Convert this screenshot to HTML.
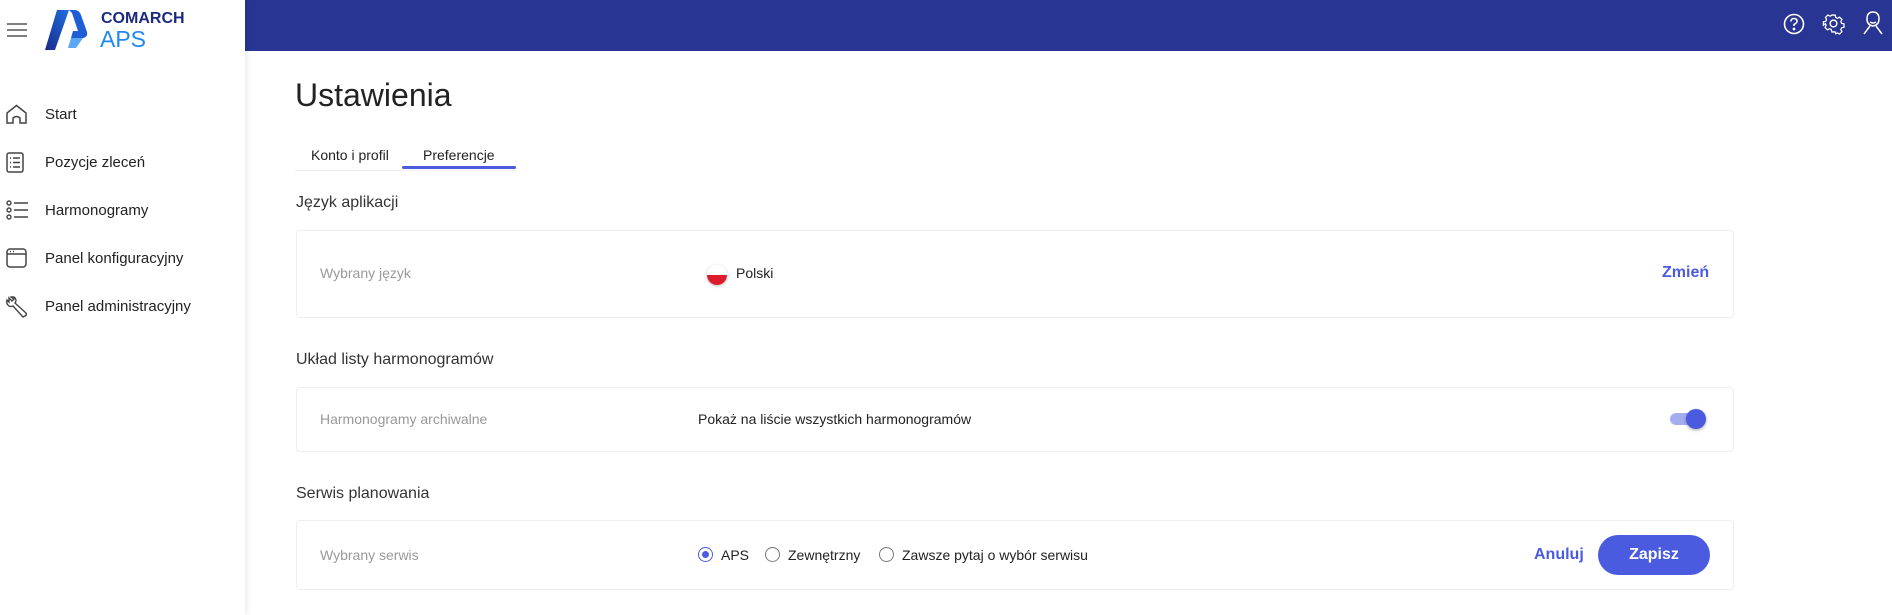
<!DOCTYPE html>
<html><head><meta charset="utf-8">
<style>
*{margin:0;padding:0;box-sizing:border-box}
body{width:1892px;height:615px;overflow:hidden;background:#fff;font-family:"Liberation Sans",sans-serif;color:#222;position:relative}
.abs{position:absolute}
.top{left:245px;top:0;width:1647px;height:51px;background:#283593}
.side{left:0;top:0;width:245px;height:615px;background:#fff;box-shadow:2px 0 6px rgba(0,0,0,0.08);z-index:2}
.nav{position:absolute;left:45px;font-size:15px;color:#222}
.ic{position:absolute;left:6px}
.card{position:absolute;left:296px;width:1438px;border:1px solid #eee;border-radius:4px;background:#fff}
.lbl{position:absolute;left:320px;font-size:14px;color:#999}
.h2{position:absolute;left:296px;font-size:16px;color:#333}
.t{position:absolute;font-size:14px;color:#222}
.radio{position:absolute;width:15px;height:15px;border:1.5px solid #777;border-radius:50%}
</style></head><body>
<div class="abs side">
  <svg class="abs" style="left:7px;top:22px" width="20" height="16" viewBox="0 0 20 16"><path d="M0 2h20M0 8h20M0 14h20" stroke="#555" stroke-width="1.5"/></svg>
  <svg class="abs" style="left:45px;top:10px" width="44" height="41" viewBox="0 0 44 41">
    <defs><linearGradient id="g" x1="0" y1="1" x2="1" y2="0"><stop offset="0" stop-color="#1a2a8a"/><stop offset="1" stop-color="#1e6fe0"/></linearGradient></defs>
    <path d="M12 0H24L10 40H0Z" fill="url(#g)"/>
    <path d="M24 0H30Q34 0 36 5L42 22Q43 27 38 28H26L28 21H33L27 3Z" fill="#1e5fd8"/>
    <path d="M26 28H38L31 38H23Z" fill="#5aa8f5"/>
  </svg>
  <div class="abs" style="left:101px;top:10px;font-size:16px;font-weight:bold;color:#1c2a80">COMARCH</div>
  <div class="abs" style="left:100px;top:26px;font-size:23px;color:#1e88f0">APS</div>
  <svg class="ic" style="top:104px" width="21" height="21" viewBox="0 0 21 21" fill="none" stroke="#444" stroke-width="1.5"><path d="M1 19V9L10.5 1.5L20 9V19H14V14Q10.5 11 7 14V19Z"/></svg>
  <svg class="ic" style="top:152px" width="18" height="21" viewBox="0 0 18 21" fill="none" stroke="#444" stroke-width="1.5"><rect x="1" y="1" width="16" height="19" rx="2"/><path d="M7 6h7M7 10.5h7M7 15h7M4 6h1M4 10.5h1M4 15h1"/></svg>
  <svg class="ic" style="top:200px" width="22" height="20" viewBox="0 0 22 20" fill="none" stroke="#444" stroke-width="1.4"><circle cx="3" cy="3" r="2"/><circle cx="3" cy="10" r="2"/><circle cx="3" cy="17" r="2"/><path d="M8 3h14M8 10h14M8 17h14"/></svg>
  <svg class="ic" style="top:248px" width="21" height="20" viewBox="0 0 21 20" fill="none" stroke="#444" stroke-width="1.5"><rect x="1" y="1" width="19" height="18" rx="3"/><path d="M1 6h19M4 3.5h1M7 3.5h1"/></svg>
  <svg class="ic" style="top:296px" width="22" height="22" viewBox="0 0 22 22" fill="none" stroke="#444" stroke-width="1.4"><path d="M3 2L6 5L8 3L5 1Q9 0 10 4Q10 6 9 7L20 17Q21 19 19 20L17 21L7 10Q5 11 3 10Q0 8 1 4L3 6Z"/></svg>
  <div class="nav" style="top:106px">Start</div>
  <div class="nav" style="top:154px">Pozycje zleceń</div>
  <div class="nav" style="top:202px">Harmonogramy</div>
  <div class="nav" style="top:250px">Panel konfiguracyjny</div>
  <div class="nav" style="top:298px">Panel administracyjny</div>
</div>
<div class="abs top"></div>
<svg class="abs" style="left:1783px;top:13px" width="22" height="22" viewBox="0 0 22 22" fill="none" stroke="#fff" stroke-width="1.6"><circle cx="11" cy="11" r="9.5"/><path d="M8 8.5Q8 5.5 11 5.5Q14 5.5 14 8.3Q14 10 11 11.5V13"/><circle cx="11" cy="16" r="0.6" fill="#fff"/></svg>
<svg class="abs" style="left:1822px;top:12px" width="23" height="23" viewBox="0 0 24 24" fill="none" stroke="#fff" stroke-width="1.5"><circle cx="12" cy="12" r="3.5"/><path d="M10 2h4l.6 2.8 2 1 2.6-1.3 2.8 2.8-1.3 2.6 1 2 2.8.6v4l-2.8.6-1 2 1.3 2.6-2.8 2.8-2.6-1.3-2 1L14 22h-4l-.6-2.8-2-1-2.6 1.3-2.8-2.8 1.3-2.6-1-2L0 14v-4l2.8-.6 1-2L2.5 4.8 5.3 2l2.6 1.3 2-1z" transform="translate(12 12) scale(0.88) translate(-12 -12)"/></svg>
<svg class="abs" style="left:1862px;top:11px" width="22" height="25" viewBox="0 0 22 25" fill="none" stroke="#fff" stroke-width="1.5"><path d="M11 1Q17 1 17 8Q17 14 11 15Q5 14 5 8Q5 1 11 1Z"/><path d="M8 15L2 23M14 15L20 23M8 11Q11 13 14 11"/></svg>

<div class="abs" style="left:295px;top:77px;font-size:32px;color:#222">Ustawienia</div>
<div class="abs" style="left:295px;top:170px;width:221px;height:1px;background:#eee"></div>
<div class="t" style="left:311px;top:147px;font-size:14px">Konto i profil</div>
<div class="t" style="left:423px;top:147px;font-size:14px">Preferencje</div>
<div class="abs" style="left:402px;top:166px;width:114px;height:3px;border-radius:2px;background:#4a5be0"></div>

<div class="h2" style="top:194px">Język aplikacji</div>
<div class="card" style="top:230px;height:88px"></div>
<div class="lbl" style="top:265px">Wybrany język</div>
<div class="abs" style="left:707px;top:265px;width:20px;height:20px;border-radius:50%;overflow:hidden;box-shadow:0 1px 3px rgba(0,0,0,.25)"><div style="height:10px;background:#fff"></div><div style="height:10px;background:#dc1c2c"></div></div>
<div class="t" style="left:736px;top:265px">Polski</div>
<div class="t" style="left:1662px;top:264px;font-size:16px;font-weight:bold;color:#4a5be0">Zmień</div>

<div class="h2" style="top:351px">Układ listy harmonogramów</div>
<div class="card" style="top:387px;height:65px"></div>
<div class="lbl" style="top:411px">Harmonogramy archiwalne</div>
<div class="t" style="left:698px;top:411px">Pokaż na liście wszystkich harmonogramów</div>
<div class="abs" style="left:1670px;top:413px;width:34px;height:12px;border-radius:6px;background:#a3aef0"></div>
<div class="abs" style="left:1686px;top:409px;width:20px;height:20px;border-radius:50%;background:#4a5be0;box-shadow:0 1px 3px rgba(0,0,0,.35)"></div>

<div class="h2" style="top:485px">Serwis planowania</div>
<div class="card" style="top:520px;height:70px"></div>
<div class="lbl" style="top:547px">Wybrany serwis</div>
<div class="radio" style="left:698px;top:547px;border-color:#4a5be0"><div style="margin:2.5px;width:7px;height:7px;border-radius:50%;background:#4a5be0"></div></div>
<div class="t" style="left:721px;top:547px">APS</div>
<div class="radio" style="left:765px;top:547px"></div>
<div class="t" style="left:788px;top:547px">Zewnętrzny</div>
<div class="radio" style="left:879px;top:547px"></div>
<div class="t" style="left:902px;top:547px">Zawsze pytaj o wybór serwisu</div>
<div class="t" style="left:1534px;top:546px;font-size:16px;font-weight:bold;color:#4a5be0">Anuluj</div>
<div class="abs" style="left:1598px;top:535px;width:112px;height:40px;border-radius:20px;background:#4a5be0;color:#fff;font-size:16px;font-weight:bold;text-align:center;line-height:40px">Zapisz</div>
</body></html>
